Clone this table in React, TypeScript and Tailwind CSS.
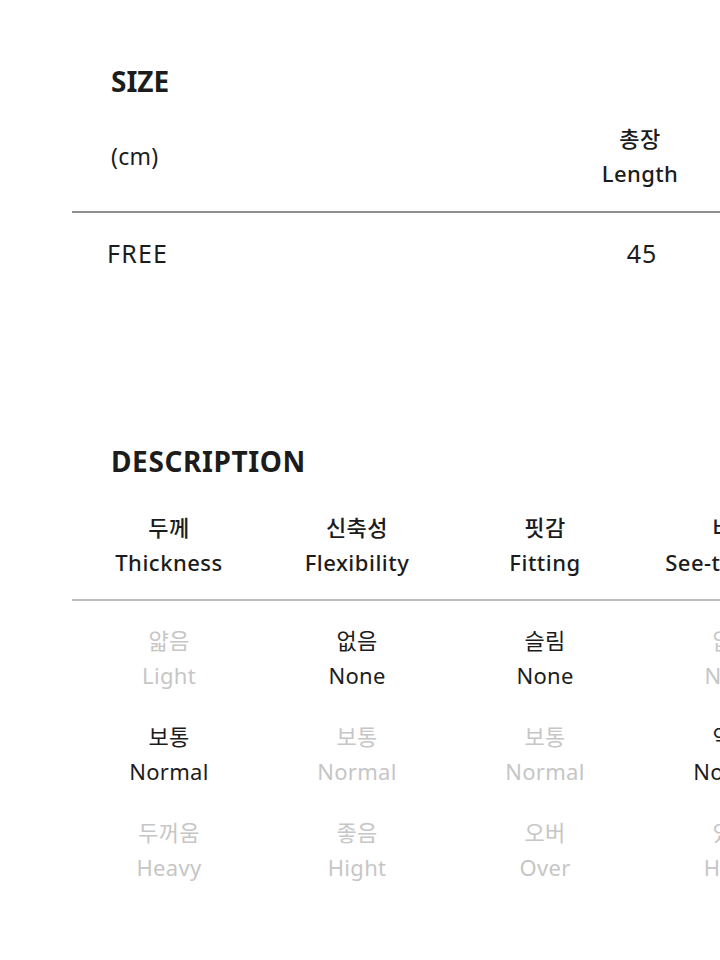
import React from 'react';

type Option = { ko: string; en: string; active: boolean };
type Column = { ko: string; en: string; options: Option[] };

const font = { fontFamily: '"Noto Sans", "Noto Sans CJK KR", sans-serif' };

const columns: Column[] = [
  {
    ko: '두께',
    en: 'Thickness',
    options: [
      { ko: '얇음', en: 'Light', active: false },
      { ko: '보통', en: 'Normal', active: true },
      { ko: '두꺼움', en: 'Heavy', active: false },
    ],
  },
  {
    ko: '신축성',
    en: 'Flexibility',
    options: [
      { ko: '없음', en: 'None', active: true },
      { ko: '보통', en: 'Normal', active: false },
      { ko: '좋음', en: 'Hight', active: false },
    ],
  },
  {
    ko: '핏감',
    en: 'Fitting',
    options: [
      { ko: '슬림', en: 'None', active: true },
      { ko: '보통', en: 'Normal', active: false },
      { ko: '오버', en: 'Over', active: false },
    ],
  },
  {
    ko: '비침',
    en: 'See-through',
    options: [
      { ko: '없음', en: 'None', active: false },
      { ko: '약간', en: 'Normal', active: true },
      { ko: '있음', en: 'Hight', active: false },
    ],
  },
];

const App: React.FC = () => {
  return (
    <div className="w-[720px] h-[960px] overflow-hidden bg-white text-[#1c1c1c]" style={font}>
      {/* Size */}
      <section className="pt-[64px]">
        <h2 className="ml-[111px] text-[28px] leading-[34px] font-bold">SIZE</h2>
        <div className="ml-[72px] w-[800px]">
          <div className="flex h-[115px] items-center pt-[3px] border-b-2 border-[#8e8e8e]">
            <div className="w-[472px] pl-[39px] text-[23px] tracking-[0.3px]">(cm)</div>
            <div className="w-[192px] text-center text-[22px] leading-[35px] font-medium tracking-[0.4px]">
              <div>총장</div>
              <div>Length</div>
            </div>
          </div>
          <div className="flex h-[82px] items-center">
            <div className="w-[472px] pl-[35px] text-[25px] tracking-[1.2px]">FREE</div>
            <div className="w-[196px] text-center text-[25px] tracking-[1px]">45</div>
          </div>
        </div>
      </section>

      {/* Description */}
      <section className="mt-[149px]">
        <h2 className="ml-[111px] text-[28px] leading-[34px] font-bold tracking-[0.6px]">DESCRIPTION</h2>
        <div className="ml-[72px] w-[800px]">
          <div className="grid grid-cols-[188px_188px_188px_188px] pl-[3px] h-[123px] pt-[13px] items-center border-b-2 border-[#bdbdbd]">
            {columns.map((col) => (
              <div key={col.en} className="text-center text-[22px] leading-[35px] font-medium tracking-[0.5px] whitespace-nowrap">
                <div>{col.ko}</div>
                <div>{col.en}</div>
              </div>
            ))}
          </div>
          <div className="grid grid-cols-[188px_188px_188px_188px] pl-[3px] pt-[9px]">
            {columns.map((col) => (
              <div key={col.en} className="flex flex-col">
                {col.options.map((opt) => (
                  <div
                    key={opt.ko + opt.en}
                    className={`h-[96px] flex flex-col items-center justify-center text-[22px] leading-[35px] tracking-[0.3px] whitespace-nowrap ${
                      opt.active ? 'text-[#1c1c1c]' : 'text-[#c6c6c6]'
                    }`}
                  >
                    <div>{opt.ko}</div>
                    <div>{opt.en}</div>
                  </div>
                ))}
              </div>
            ))}
          </div>
        </div>
      </section>
    </div>
  );
};

export default App;
